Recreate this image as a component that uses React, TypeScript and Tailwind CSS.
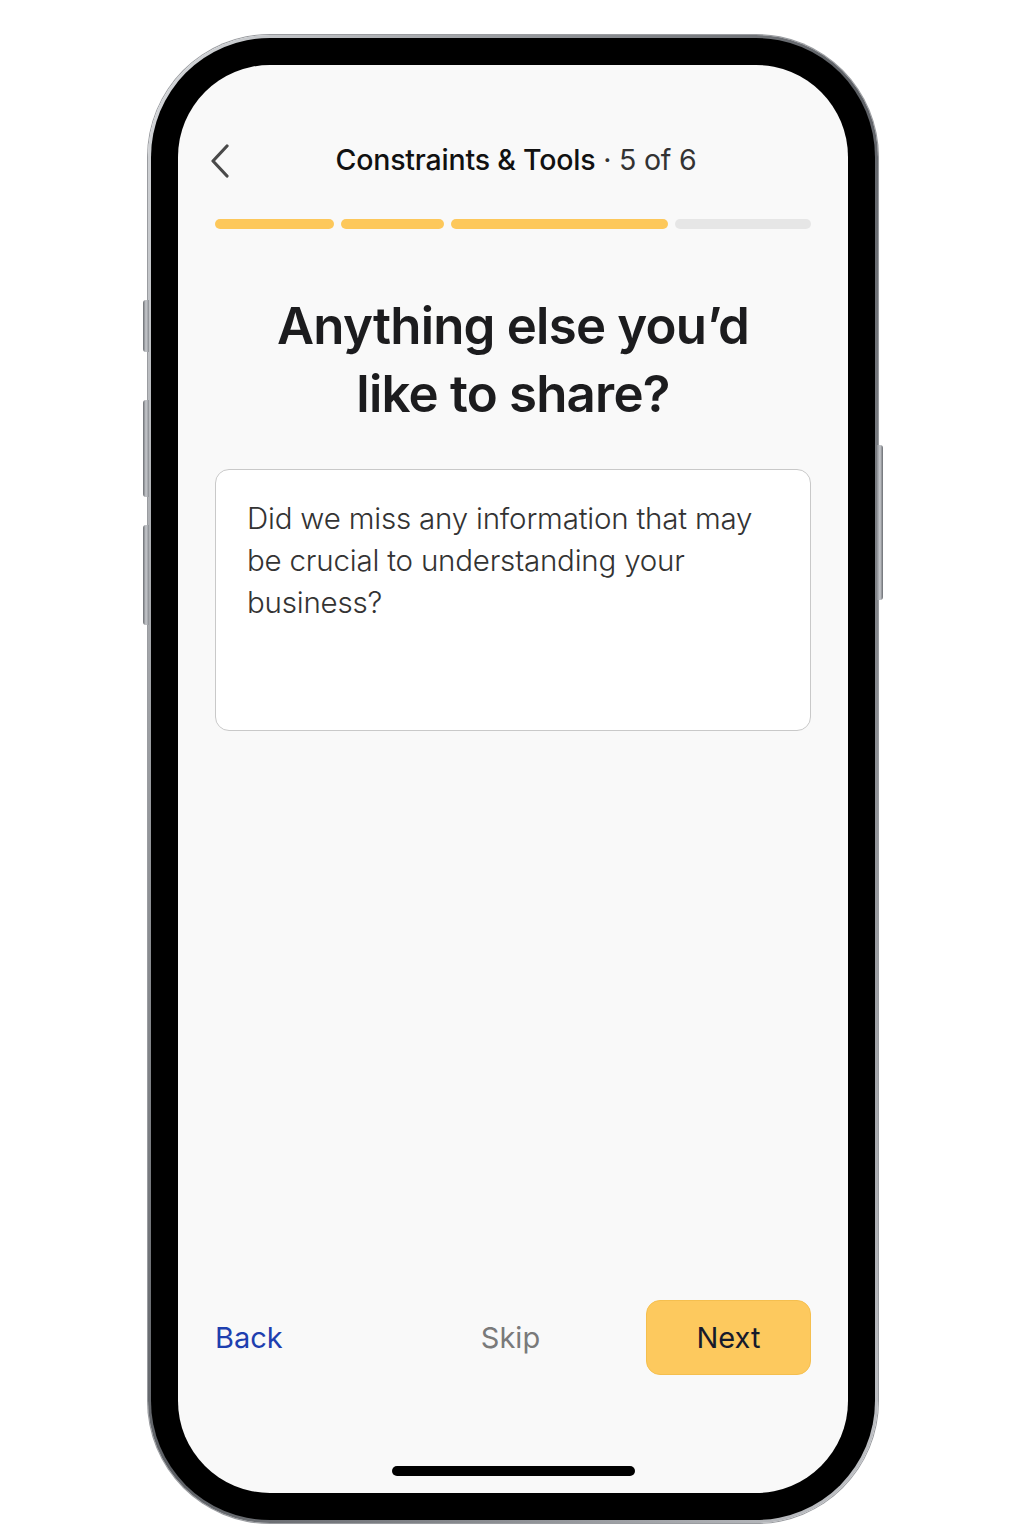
const SEGMENTS = [
  { width: "w-[119px]", done: true },
  { width: "w-[103px]", done: true },
  { width: "w-[217px]", done: true },
  { width: "flex-1", done: false },
];

function SideButtons() {
  return (
    <>
      {/* action + volume, left edge */}
      <div className="absolute left-[-5px] top-[265px] w-[6px] h-[52px] rounded-l-[3px] bg-gradient-to-r from-[#6b6e73] via-[#c9cbcf] to-[#8a8d92]" />
      <div className="absolute left-[-5px] top-[365px] w-[6px] h-[97px] rounded-l-[3px] bg-gradient-to-r from-[#6b6e73] via-[#c9cbcf] to-[#8a8d92]" />
      <div className="absolute left-[-5px] top-[490px] w-[6px] h-[100px] rounded-l-[3px] bg-gradient-to-r from-[#6b6e73] via-[#c9cbcf] to-[#8a8d92]" />
      {/* power, right edge */}
      <div className="absolute right-[-5px] top-[410px] w-[6px] h-[155px] rounded-r-[3px] bg-gradient-to-l from-[#6b6e73] via-[#c9cbcf] to-[#8a8d92]" />
    </>
  );
}

export default function App() {
  return (
    <div
      className="min-h-screen bg-white pt-[35px]"
      style={{ fontFamily: "Inter, 'Noto Sans', sans-serif" }}
    >
      <div className="relative mx-auto w-[730px] h-[1488px] translate-x-[1px]">
        <SideButtons />
        <div className="h-full rounded-[122px] bg-gradient-to-br from-[#d9dbde] via-[#5c5f64] to-[#c4c6ca] p-[3px] shadow-[0_0_0_1px_#9a9ca0]">
          <div className="h-full rounded-[119px] bg-black p-[27px]">
            <div className="h-full rounded-[92px] bg-[#f9f9f9] flex flex-col px-[37px] pt-[78px] pb-[17px] overflow-hidden">
              {/* header */}
              <div className="relative h-[34px] flex items-center justify-center">
                <svg
                  className="absolute left-[-6px] top-[1px]"
                  width="22"
                  height="34"
                  viewBox="0 0 22 34"
                  fill="none"
                  stroke="#4a4a4a"
                  strokeWidth="3.2"
                  strokeLinecap="round"
                  strokeLinejoin="round"
                >
                  <polyline points="18,2 4,17 18,32" />
                </svg>
                <div className="text-[28.5px] leading-[34px] tracking-[-0.2px] translate-x-[3px]">
                  <span className="font-medium text-[#111]">Constraints &amp; Tools</span>
                  <span className="text-[#333]"> · 5 of 6</span>
                </div>
              </div>

              {/* progress */}
              <div className="mt-[42px] flex gap-[7px]">
                {SEGMENTS.map((s, i) => (
                  <div
                    key={i}
                    className={`${s.width} h-[10px] rounded-full ${s.done ? "bg-[#fdc85b]" : "bg-[#e6e6e6]"}`}
                  />
                ))}
              </div>

              {/* question */}
              <h1 className="mt-[63px] text-center text-[51px] leading-[68px] font-semibold tracking-[-0.8px] text-[#1c1c1e]">
                Anything else you’d
                <br />
                like to share?
              </h1>

              <div className="mt-[41px] h-[262px] rounded-[14px] border border-[#c9c9c9] bg-white pl-[31px] pr-[40px] pt-[27px]">
                <p className="text-[29.5px] leading-[42px] font-light text-[#333] tracking-[-0.2px]">
                  Did we miss any information that may be crucial to understanding your business?
                </p>
              </div>

              <div className="flex-1" />

              {/* footer actions */}
              <div className="flex items-center h-[75px]">
                <button className="w-[160px] text-left text-[29px] text-[#1e3faf]">Back</button>
                <button className="flex-1 text-center text-[29px] text-[#7a7a7a]">Skip</button>
                <button className="w-[165px] h-[75px] rounded-[14px] bg-[#fdc95e] border border-[#f5bf4f] text-[29px] text-[#171a2b]">
                  Next
                </button>
              </div>

              <div className="mt-[91px] mx-auto w-[243px] h-[10px] rounded-full bg-black" />
            </div>
          </div>
        </div>
      </div>
    </div>
  );
}
